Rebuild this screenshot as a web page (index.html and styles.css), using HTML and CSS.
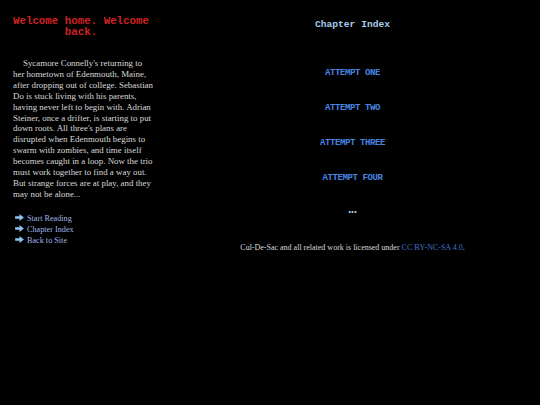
FILE: index.html
```html
<!DOCTYPE html>
<html>
<head>
<meta charset="utf-8">
<link rel="stylesheet" href="styles.css">
</head>
<body>
<div class="page">
  <aside class="side">
    <h1 class="title">Welcome home. Welcome back.</h1>
    <p class="blurb">Sycamore Connelly's returning to her hometown of Edenmouth, Maine, after dropping out of college. Sebastian Do is stuck living with his parents, having never left to begin with. Adrian Steiner, once a drifter, is starting to put down roots. All three's plans are disrupted when Edenmouth begins to swarm with zombies, and time itself becomes caught in a loop. Now the trio must work together to find a way out. But strange forces are at play, and they may not be alone...</p>
    <ul class="nav">
      <li><svg class="arrow" viewBox="0 0 10 8"><path d="M0 2.5H5V0L10 4L5 8V5.5H0Z"/></svg><a href="#">Start Reading</a></li>
      <li><svg class="arrow" viewBox="0 0 10 8"><path d="M0 2.5H5V0L10 4L5 8V5.5H0Z"/></svg><a href="#">Chapter Index</a></li>
      <li><svg class="arrow" viewBox="0 0 10 8"><path d="M0 2.5H5V0L10 4L5 8V5.5H0Z"/></svg><a href="#">Back to Site</a></li>
    </ul>
  </aside>
  <main class="main">
    <h2 class="index-title">Chapter Index</h2>
    <ul class="chapters">
      <li><a href="#">ATTEMPT ONE</a></li>
      <li><a href="#">ATTEMPT TWO</a></li>
      <li><a href="#">ATTEMPT THREE</a></li>
      <li><a href="#">ATTEMPT FOUR</a></li>
    </ul>
    <div class="dots">&#8226;&#8226;&#8226;</div>
    <p class="footer">Cul-De-Sac and all related work is licensed under <a href="#">CC BY-NC-SA 4.0</a>.</p>
  </main>
</div>
</body>
</html>
```

FILE: styles.css
```css
html, body {
  margin: 0;
  padding: 0;
  background: #000;
}
body {
  width: 540px;
  height: 405px;
  color: #d8d8d8;
  font-family: "Liberation Serif", serif;
}
.page {
  display: flex;
  align-items: flex-start;
}
.side {
  width: 165px;
  box-sizing: border-box;
  padding: 16px 11px 0 13px;
}
.title {
  margin: 0 2.5px 0 -2.5px;
  font-family: "Liberation Mono", monospace;
  font-weight: bold;
  font-size: 10.8px;
  line-height: 11px;
  color: #d02222;
  text-align: center;
}
.blurb {
  margin: 20px 0 0 0;
  font-size: 8.9px;
  line-height: 10.9px;
  text-indent: 10px;
}
.nav {
  list-style: none;
  margin: 13px 0 0 2px;
  padding: 0;
}
.nav li {
  display: flex;
  align-items: center;
  height: 11px;
  font-size: 8.2px;
}
.arrow {
  width: 9px;
  height: 7px;
  fill: #8cc4f2;
  margin-right: 3px;
  margin-top: -2px;
}
.nav a {
  color: #9fb6e6;
  text-decoration: none;
}
.main {
  flex: 1;
  text-align: center;
  padding-top: 19px;
}
.index-title {
  margin: 0;
  font-family: "Liberation Mono", monospace;
  font-weight: bold;
  font-size: 9.6px;
  line-height: 12px;
  color: #a8cbea;
}
.chapters {
  list-style: none;
  margin: 20px 0 0 0;
  padding: 0;
}
.chapters li {
  height: 35px;
  line-height: 12px;
  padding-top: 13px;
  box-sizing: border-box;
}
.chapters a {
  font-family: "Liberation Mono", monospace;
  font-weight: bold;
  font-size: 9px;
  color: #4884e2;
  text-decoration: none;
  letter-spacing: -0.4px;
}
.dots {
  margin-top: 17px;
  font-size: 8px;
  line-height: 10px;
  color: #b8d4f0;
  letter-spacing: 0;
}
.footer {
  margin: 25px 0 0 0;
  font-size: 8px;
  line-height: 10px;
}
.footer a {
  color: #3f72cc;
  text-decoration: none;
}
```
